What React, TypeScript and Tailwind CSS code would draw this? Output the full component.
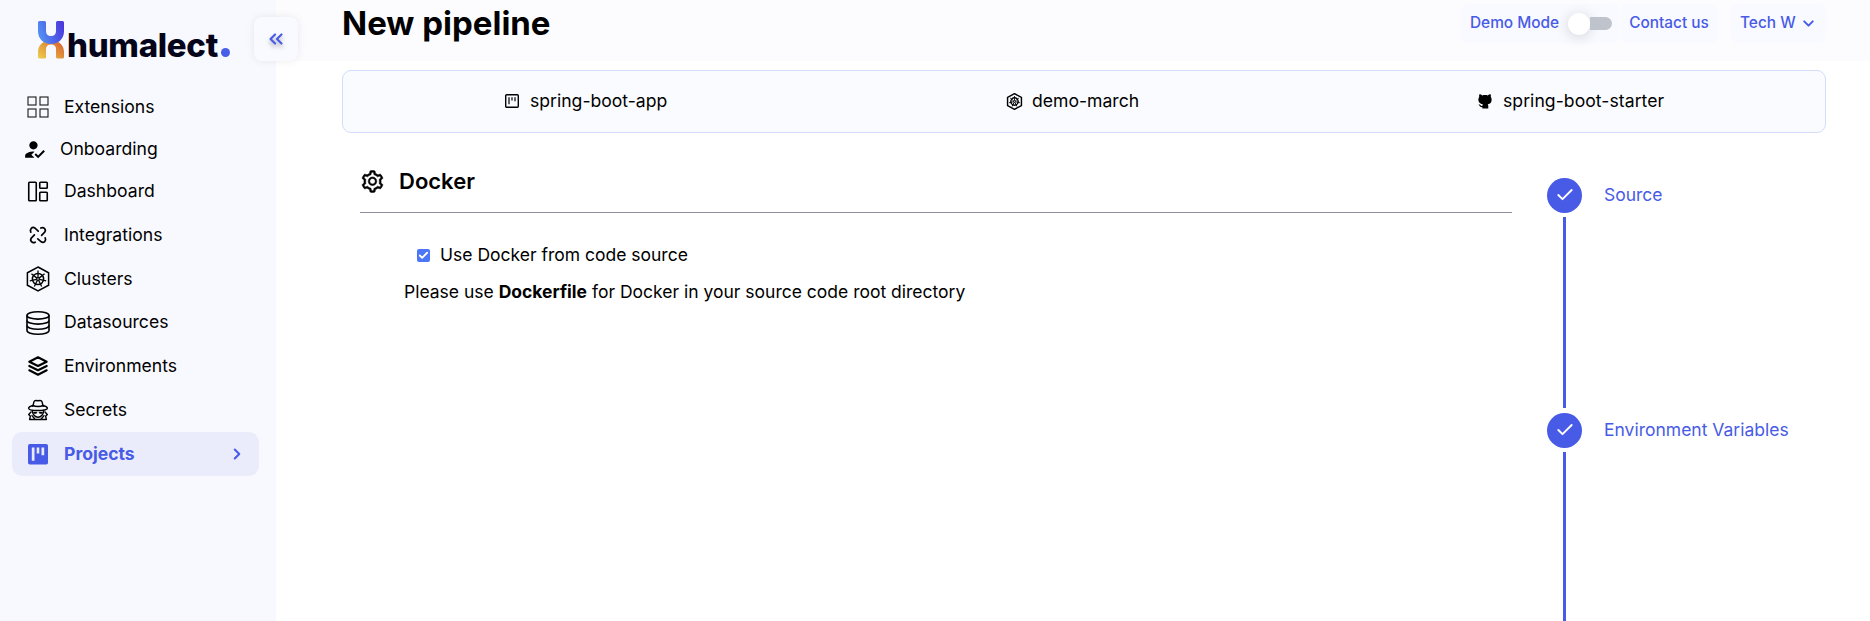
import React from "react";
import { MdHowToReg } from "react-icons/md";
import { TbStack2 } from "react-icons/tb";
import { AiOutlineSetting } from "react-icons/ai";
import { Check, ChevronDown, ChevronRight, ChevronsLeft } from "lucide-react";

const WHEEL_ANGLES = [0, 51.43, 102.86, 154.29, 205.71, 257.14, 308.57];

function ExtensionsIcon() {
  return (
    <svg width="24" height="24" viewBox="0 0 24 24" fill="none" stroke="#1a1a1a" strokeWidth="1.1">
      <rect x="2" y="2" width="8" height="8" />
      <rect x="14" y="2" width="8" height="8" />
      <rect x="2" y="14" width="8" height="8" />
      <rect x="14" y="14" width="8" height="8" />
    </svg>
  );
}

function DashboardIcon() {
  return (
    <svg width="24" height="24" viewBox="0 0 24 24" fill="none" stroke="black" strokeWidth="1.6">
      <rect x="2.75" y="2.25" width="7.5" height="18.5" rx="0.8" />
      <rect x="13.75" y="2.25" width="7.5" height="6" rx="0.8" />
      <rect x="13.75" y="12.25" width="7.5" height="8.5" rx="0.8" />
    </svg>
  );
}

function IntegrationsIcon() {
  return (
    <svg width="24" height="24" viewBox="0 0 24 24" fill="none" stroke="black" strokeWidth="1.7" strokeLinecap="round">
      <path d="M4.8 9.2C3.4 6.2 6.2 3.4 8.8 5L12.2 8.2" />
      <path d="M14.8 5c3-1.4 5.6 1.4 4 4L15.6 12.4" />
      <path d="M19.2 14.8c1.4 3-1.4 5.6-4 4L11.8 15.8" />
      <path d="M9.2 19.2c-3 1.4-5.6-1.4-4-4L8.4 11.8" />
    </svg>
  );
}

function ClusterIcon({ size = 26, stroke = 1.5 }: { size?: number; stroke?: number }) {
  return (
    <svg width={size} height={size} viewBox="0 0 26 26" fill="none" stroke="black" strokeWidth={stroke}>
      <path d="M13 1 23.6 6.8V19.2L13 25 2.4 19.2V6.8Z" />
      <circle cx="13" cy="13" r="5.6" />
      <circle cx="13" cy="13" r="1.4" strokeWidth="1.2" />
      {WHEEL_ANGLES.map((a) => (
        <path key={a} d="M13 11.6V4.6" strokeWidth="1.3" transform={`rotate(${a} 13 13)`} />
      ))}
    </svg>
  );
}

function DatasourceIcon() {
  return (
    <svg width="26" height="26" viewBox="0 0 26 26" fill="none" stroke="black" strokeWidth="1.6">
      <ellipse cx="13" cy="5.4" rx="11" ry="3.7" />
      <path d="M2 5.4V20.6C2 22.7 6.9 24.3 13 24.3S24 22.7 24 20.6V5.4" />
      <path d="M2 10.4C2 12.5 6.9 14.1 13 14.1S24 12.5 24 10.4M2 15.5C2 17.6 6.9 19.2 13 19.2S24 17.6 24 15.5" />
    </svg>
  );
}

function SecretsIcon() {
  return (
    <svg width="24" height="24" viewBox="0 0 24 24" fill="none" stroke="black" strokeWidth="1.4" strokeLinejoin="round" strokeLinecap="round">
      <path d="M6.8 8.3 8 3.6C8.4 2.2 9.8 2.3 12 2.8 14.2 2.3 15.6 2.2 16 3.6L17.2 8.3" />
      <path d="M6.8 7.5C4 8.3 2.6 9.3 2.6 10.2 2.6 11.5 6.8 12.5 12 12.5S21.4 11.5 21.4 10.2C21.4 9.3 20 8.3 17.2 7.5 14.5 8.8 9.5 8.8 6.8 7.5Z" />
      <path d="M6.2 12.5C6.3 16.2 9 19.2 12 19.2S17.7 16.2 17.8 12.5" />
      <path d="M7.3 14.1H11L10.3 15.4H8.2ZM16.7 14.1H13L13.7 15.4H15.8Z" fill="black" strokeWidth="0.5" />
      <path d="M5 14 2.7 16.4 4.4 18.2 3.6 21.5H20.4L19.6 18.2 21.3 16.4 19 14M6 17.6 8.8 21M18 17.6 15.2 21" />
    </svg>
  );
}

function ProjectsIcon() {
  return (
    <svg width="24" height="24" viewBox="0 0 24 24">
      <rect x="2" y="2" width="20" height="20.5" rx="1.8" fill="#485be6" />
      <path d="M5.8 5.5H8.5V18.8H5.8ZM10.7 5.5H13.3V11.5H10.7ZM15.5 5.5H18.2V13.3H15.5Z" fill="#ebecfb" />
    </svg>
  );
}

function BoardIcon() {
  return (
    <svg width="14" height="14" viewBox="0 0 14 14" fill="none" stroke="black" strokeWidth="1.4">
      <rect x="0.7" y="0.7" width="12.6" height="12.6" rx="1" />
      <path d="M4 3.2V10.2M7 3.2V6.4M10 3.2V7.2" strokeWidth="1.2" />
    </svg>
  );
}

function OctocatIcon() {
  return (
    <svg width="14" height="15" viewBox="0 0 14 15">
      <path
        d="M1.4.3C2.4.3 3.5.8 4.3 1.4 6 1 8 1 9.7 1.4 10.5.8 11.6.3 12.6.3 13 1.4 13 2.3 12.8 3 13.8 4.4 13.8 6 13.3 7.7 12.8 9.3 11.4 10 9.7 10.3 10.2 11 10.3 11.7 10.3 12.5V14.6H4.3V13.1C2.7 13.4 2 12.6 1.5 11.7 1.2 11.2.9 11 .3 10.6 1.5 10.2 2.3 10.9 2.8 11.6 3.2 12.1 3.8 12.1 4.4 11.8 4.5 11.2 4.6 10.7 4.9 10.3 2.8 10 1.2 9.2.7 7.6.2 6 .2 4.4 1.2 3 1 2.3 1 1.4 1.4.3Z"
        fill="black"
      />
    </svg>
  );
}

function LogoMark() {
  return (
    <svg width="26" height="38" viewBox="0 0 26 38">
      <defs>
        <linearGradient id="markTop" x1="0" y1="0.5" x2="1" y2="0.2">
          <stop offset="0" stopColor="#5391f2" />
          <stop offset="1" stopColor="#4a36dc" />
        </linearGradient>
        <linearGradient id="markBottom" x1="0" y1="1" x2="1" y2="0.2">
          <stop offset="0" stopColor="#ecd04e" />
          <stop offset="1" stopColor="#d9652f" />
        </linearGradient>
      </defs>
      <path d="M0 36V31C0 25 4 19.5 13 19.5S26 25 26 31V36Q26 37.5 24.5 37.5H19.5Q18 37.5 18 36V28Q18 23.5 13 23.5T8 28V36Q8 37.5 6.5 37.5H1.5Q0 37.5 0 36Z" fill="url(#markBottom)" />
      <path d="M0 1.5Q0 0 1.5 0H6.5Q8 0 8 1.5V10Q8 15 13 15T18 10V1.5Q18 0 19.5 0H24.5Q26 0 26 1.5V10.5C26 17.5 20.5 23 13 23S0 17.5 0 10.5Z" fill="url(#markTop)" />
    </svg>
  );
}

const NAV = [
  { label: "Extensions", icon: <ExtensionsIcon />, row: "h-[42px] pl-[14px]" },
  { label: "Onboarding", icon: <MdHowToReg size={25} className="mt-px" />, row: "h-[42px] pl-[10px]" },
  { label: "Dashboard", icon: <DashboardIcon />, row: "h-[43px] pl-[14px]" },
  { label: "Integrations", icon: <IntegrationsIcon />, row: "h-[44px] pl-[14px]" },
  { label: "Clusters", icon: <ClusterIcon />, row: "h-[44px] pl-[14px]" },
  { label: "Datasources", icon: <DatasourceIcon />, row: "h-[43px] pl-[14px]" },
  { label: "Environments", icon: <TbStack2 size={26} />, row: "h-[44px] pl-[14px]" },
  { label: "Secrets", icon: <SecretsIcon />, row: "h-[44px] pl-[14px]" },
];

function Step({ label }: { label: string }) {
  return (
    <div className="flex flex-col">
      <div className="flex h-9 items-center">
        <div className="flex size-[35px] items-center justify-center rounded-full bg-[#485be6] text-white">
          <Check size={20} strokeWidth={2.3} />
        </div>
        <span className="ml-[22px] text-[17.5px] text-[#485be6]">{label}</span>
      </div>
      <div className="my-1 ml-4 h-[191px] w-[3px] bg-[#485be6]" />
    </div>
  );
}

export default function App() {
  return (
    <div className="flex h-[621px] w-[1870px] overflow-hidden bg-white font-['Inter',sans-serif] text-black">
      <aside className="relative h-full w-[276px] shrink-0 bg-[#f8f9fe]">
        <div className="flex h-[86px] items-start pl-[38px] pt-[21px]">
          <LogoMark />
          <div className="ml-[3px] mt-px flex items-baseline">
            <span className="text-[33px] font-extrabold leading-[46px] tracking-[-0.3px] text-[#04041a]">humalect</span>
            <span className="ml-[3px] size-[9px] rounded-full bg-[#485fe8]" />
          </div>
        </div>
        <nav className="flex flex-col pl-3 text-[17.6px]">
          {NAV.map((n) => (
            <div key={n.label} className={`flex items-center ${n.row}`}>
              <span className="-ml-px flex w-[26px] shrink-0 items-center justify-center">{n.icon}</span>
              <span className="ml-[13px]">{n.label}</span>
            </div>
          ))}
          <div className="flex h-[44px] w-[247px] items-center rounded-[10px] bg-[#ebecfb] pl-[14px] text-[#485be6]">
            <span className="-ml-px flex w-[26px] justify-center">
              <ProjectsIcon />
            </span>
            <span className="ml-[13px] font-bold">Projects</span>
            <ChevronRight size={18} strokeWidth={2.8} className="ml-auto mr-[13px]" />
          </div>
        </nav>
        <button className="absolute left-[254px] top-[17px] flex size-[44px] items-center justify-center rounded-[8px] bg-[#f9faff] text-[#485be6] shadow-[0_0_8px_rgba(0,0,0,0.08)]">
          <ChevronsLeft size={22} strokeWidth={2.3} className="drop-shadow-[0_3px_2px_rgba(0,0,0,0.3)]" />
        </button>
      </aside>

      <div className="flex min-w-0 flex-1 flex-col">
        <header className="flex h-[61px] items-start justify-between bg-[#fcfcfe] pl-[66px] pr-[44px]">
          <h1 className="mt-[3px] text-[33px] font-bold leading-10">New pipeline</h1>
          <div className="mt-1 flex text-[15.4px] font-medium text-[#485be6]">
            <div className="flex h-[39px] w-[158px] items-center rounded-[8px] bg-[#f9faff] pl-[9px]">
              <span className="w-[98px] whitespace-nowrap pb-0.5">Demo Mode</span>
              <span className="flex h-[22px] w-[44px] items-center">
                <span className="size-[22px] shrink-0 rounded-full bg-white shadow-[0_2px_14px_rgba(0,0,0,0.16)]" />
                <span className="h-[13px] w-[22px] rounded-r-full bg-[#bfc3cc]" />
              </span>
            </div>
            <div className="ml-px flex h-[39px] w-[98px] items-center justify-center rounded-[8px] bg-[#f9faff] pb-0.5">Contact us</div>
            <div className="ml-[13px] flex h-[39px] w-[95px] items-center rounded-[8px] bg-[#f9faff] pl-[9px]">
              <span className="whitespace-nowrap pb-0.5">Tech W</span>
              <ChevronDown size={17} strokeWidth={2.8} className="ml-1" />
            </div>
          </div>
        </header>

        <main className="flex flex-1 flex-col pl-[66px] pr-[44px] pt-[9px]">
          <div className="flex h-[63px] shrink-0 items-center rounded-[9px] border border-[#d3ddfb] bg-[#fafbff] pl-[162px] text-[17.6px]">
            <div className="flex w-[501px] items-center gap-[11px]">
              <BoardIcon />
              <span>spring-boot-app</span>
            </div>
            <div className="flex w-[472px] items-center gap-[9px]">
              <ClusterIcon size={17} stroke={2.2} />
              <span>demo-march</span>
            </div>
            <div className="flex items-center gap-[11px]">
              <OctocatIcon />
              <span className="tracking-[0.05px]">spring-boot-starter</span>
            </div>
          </div>

          <div className="flex flex-1">
            <section className="ml-[18px] w-[1152px]">
              <div className="flex h-[80px] items-center border-b border-[#8d8f9e] pt-[18px]">
                <AiOutlineSetting size={25} stroke="black" strokeWidth={22} />
                <h2 className="ml-[14px] text-[22px] font-semibold">Docker</h2>
              </div>
              <div className="ml-[44px] mt-[29px] flex flex-col text-[17.5px]">
                <label className="ml-[13px] flex h-[26px] items-center">
                  <span className="flex size-[13px] items-center justify-center rounded-[2px] bg-[#4c76f6]">
                    <Check size={11} strokeWidth={4} color="white" />
                  </span>
                  <span className="ml-[10px]">Use Docker from code source</span>
                </label>
                <p className="mt-[11px] leading-[26px]">
                  Please use <b>Dockerfile</b> for Docker in your source code root directory
                </p>
              </div>
            </section>
            <aside className="ml-[35px] flex h-[488px] flex-col pt-[44px]">
              <Step label="Source" />
              <Step label="Environment Variables" />
            </aside>
          </div>
        </main>
      </div>
    </div>
  );
}
